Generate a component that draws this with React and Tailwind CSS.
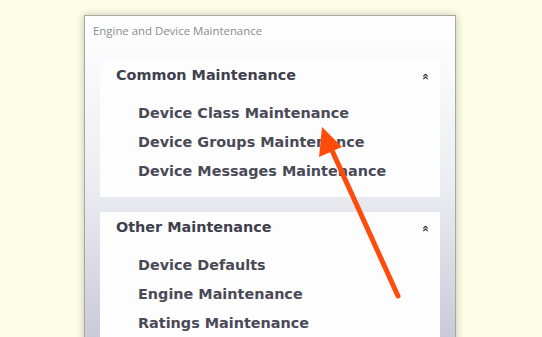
import { ChevronsUp } from 'lucide-react';

const sections = [
  {
    title: 'Common Maintenance',
    items: ['Device Class Maintenance', 'Device Groups Maintenance', 'Device Messages Maintenance'],
  },
  {
    title: 'Other Maintenance',
    items: ['Device Defaults', 'Engine Maintenance', 'Ratings Maintenance'],
  },
];

function Section({ title, items }) {
  return (
    <div className="bg-[#fdfdfe] pl-4 pr-2 pt-[4px] pb-[11px]">
      <div className="flex items-center justify-between h-[22px]">
        <span className="text-[14.4px] font-bold text-[#3f3f4d] translate-y-[1px]">{title}</span>
        <ChevronsUp size={9} strokeWidth={3} className="text-[#333] mr-[2px] translate-y-[1px]" />
      </div>
      <div className="mt-[13px] pl-[22px] flex flex-col">
        {items.map((it) => (
          <div key={it} className="h-[29px] leading-[29px] text-[14.4px] font-bold text-[#4a4a56]">
            {it}
          </div>
        ))}
      </div>
    </div>
  );
}

export default function App() {
  return (
    <div className="relative w-[542px] h-[337px] overflow-hidden bg-[#fefee8]" style={{ fontFamily: '"DejaVu Sans", sans-serif' }}>
      <div className="ml-[84px] mt-[15px] w-[372px] h-[340px] border border-[#a8a8a0] shadow-[0_0_8px_rgba(0,0,0,0.25)] bg-gradient-to-b from-white via-[#ecedf2] to-[#c6c7d6]">
        <div className="h-[30px] pl-[8px] pt-[6px] text-[11.4px] text-[#8a8a92]" style={{ fontFamily: '"Open Sans", sans-serif' }}>
          Engine and Device Maintenance
        </div>
        <div className="flex flex-col gap-[15px] ml-[15px] mr-[15px] mt-[14px]">
          {sections.map((s) => (
            <Section key={s.title} {...s} />
          ))}
        </div>
      </div>
      <svg className="absolute left-0 top-0" width="542" height="337">
        <line x1="398" y1="296" x2="330" y2="146" stroke="#ff4c0a" strokeWidth="5" strokeLinecap="round" />
        <polygon points="322,127 342,147 319,157" fill="#ff4c0a" />
      </svg>
    </div>
  );
}
